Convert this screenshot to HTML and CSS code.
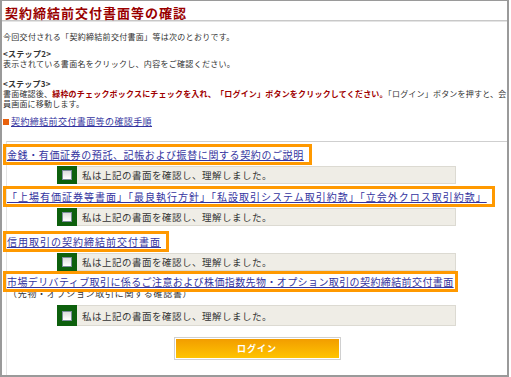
FILE: index.html
```html
<html>
	<head>
		<title>契約締結前交付書面等の確認</title>
		<meta charset="utf-8">
		<link rel="stylesheet" href="styles.css">
	</head>
	<body>
		<div class="frame">
			<h1 class="title">契約締結前交付書面等の確認</h1>
			<div class="intro">
				<p class="lead">今回交付される「契約締結前交付書面」等は次のとおりです。</p>
				<p class="step2"><b>&lt;ステップ2&gt;</b><br>表示されている書面名をクリックし、内容をご確認ください。</p>
				<p class="step3"><b>&lt;ステップ3&gt;</b><br>書面確認後、<b class="warn">緑枠のチェックボックスにチェックを入れ、「ログイン」ボタンをクリックしてください。</b>「ログイン」ボタンを押すと、会<br>員画面に移動します。</p>
				<p class="guide"><span class="mark"></span><a href="#">契約締結前交付書面等の確認手順</a></p>
			</div>
			<div class="docs">
				<div class="doc">
					<div class="doc-title doc-title-narrow"><a href="#">金銭・有価証券の預託、記帳および振替に関する契約のご説明</a></div>
					<label class="confirm"><span class="check"><input type="checkbox"></span>私は上記の書面を確認し、理解しました。</label>
				</div>
				<div class="doc">
					<div class="doc-title"><a href="#">「上場有価証券等書面」「最良執行方針」「私設取引システム取引約款」「立会外クロス取引約款」</a></div>
					<label class="confirm"><span class="check"><input type="checkbox"></span>私は上記の書面を確認し、理解しました。</label>
				</div>
				<div class="doc doc-spaced">
					<div class="doc-title"><a href="#">信用取引の契約締結前交付書面</a></div>
					<label class="confirm"><span class="check"><input type="checkbox"></span>私は上記の書面を確認し、理解しました。</label>
				</div>
				<div class="doc doc-tight">
					<div class="doc-title doc-title-long"><a href="#">市場デリバティブ取引に係るご注意および株価指数先物・オプション取引の契約締結前交付書面</a></div>
					<div class="doc-note">（先物・オプション取引に関する確認書）</div>
					<label class="confirm confirm-last"><span class="check"><input type="checkbox"></span>私は上記の書面を確認し、理解しました。</label>
				</div>
				<div class="actions">
					<button type="button" class="login">ログイン</button>
				</div>
			</div>
		</div>
	</body>
</html>
```

FILE: styles.css
```css
body {
  margin: 0;
  font-family: "Noto Sans CJK JP", "Noto Sans", sans-serif;
  color: #333;
  background: #fff;
}

/* Outer frame */
.frame {
  box-sizing: border-box;
  width: 509px;
  height: 377px;
  border: 2px solid #9a9a9a;
  border-top-width: 1px;
  overflow: hidden;
}

/* Page heading */
.title {
  margin: 5px 0 0;
  padding-left: 3px;
  font-size: 13px;
  letter-spacing: 1px;
  line-height: 14px;
  color: #990000;
  font-weight: bold;
  border-bottom: 1px solid #c8c8c8;
  box-shadow: 0 1px 0 #e4e4e4;
}

/* Instructions */
.intro {
  margin-top: 11px;
  padding-left: 1px;
  font-size: 8px;
  letter-spacing: 0.3px;
  line-height: 10px;
}
.intro p {
  margin: 0;
}
.intro .step2 {
  margin-top: 7px;
}
.intro .step3 {
  margin-top: 10px;
  letter-spacing: 0.2px;
  white-space: nowrap;
}
.warn {
  color: #a00000;
}
.intro .guide {
  margin-top: 8px;
  font-size: 9px;
  letter-spacing: 0.4px;
}
.mark {
  display: inline-block;
  width: 6px;
  height: 6px;
  margin-right: 2px;
  background: #e8600c;
}
a {
  color: #3434a0;
}

/* Document list */
.docs {
  margin: 14px 0 0 4px;
  border-top: 1px solid #cfcfcf;
  border-left: 1px solid #e4e4e4;
  height: 240px;
}
.doc {
  display: flex;
  flex-direction: column;
  align-items: flex-start;
  margin-top: 2px;
}
.doc-spaced {
  margin-top: 5px;
}
.doc-tight {
  margin-top: 0;
}
.doc-title {
  position: relative;
  z-index: 1;
  margin-left: -4px;
  padding: 0 5px 0 1px;
  border: 3px solid #ff9900;
  font-size: 10px;
  letter-spacing: 1px;
  line-height: 15px;
}
.doc-title-narrow {
  letter-spacing: 0.6px;
}
.doc-title-long {
  letter-spacing: 0.4px;
  padding-right: 1px;
}
.doc-note {
  margin-top: -3px;
  padding-left: 1px;
  font-size: 9px;
  letter-spacing: 0.7px;
  line-height: 10px;
}

/* Confirmation rows */
.confirm {
  box-sizing: border-box;
  display: flex;
  align-items: center;
  margin: 1px 0 0 50px;
  width: 399px;
  height: 18px;
  background: #efede6;
  border: 1px solid #dcdad2;
  font-size: 9.5px;
  letter-spacing: 0.5px;
}
.confirm-last {
  margin-top: 6px;
  height: 21px;
}
.check {
  align-self: stretch;
  display: flex;
  align-items: center;
  justify-content: center;
  width: 20px;
  margin: -1px 5px -1px -1px;
  background: #0d600d;
}
.check input {
  -webkit-appearance: none;
  appearance: none;
  width: 10px;
  height: 10px;
  margin: 0;
  border: 1px solid #7d8c9c;
  background: linear-gradient(#dcdcdc, #fff);
}

/* Login button */
.actions {
  display: flex;
  justify-content: center;
  margin-top: 11px;
}
.login {
  width: 167px;
  height: 23px;
  padding: 1px;
  border: 1px solid #d0d0d0;
  background: linear-gradient(#f29d00, #ffc400) content-box;
  color: #fff;
  font: bold 9px "Noto Sans CJK JP", sans-serif;
  letter-spacing: 1px;
  cursor: pointer;
}
```
